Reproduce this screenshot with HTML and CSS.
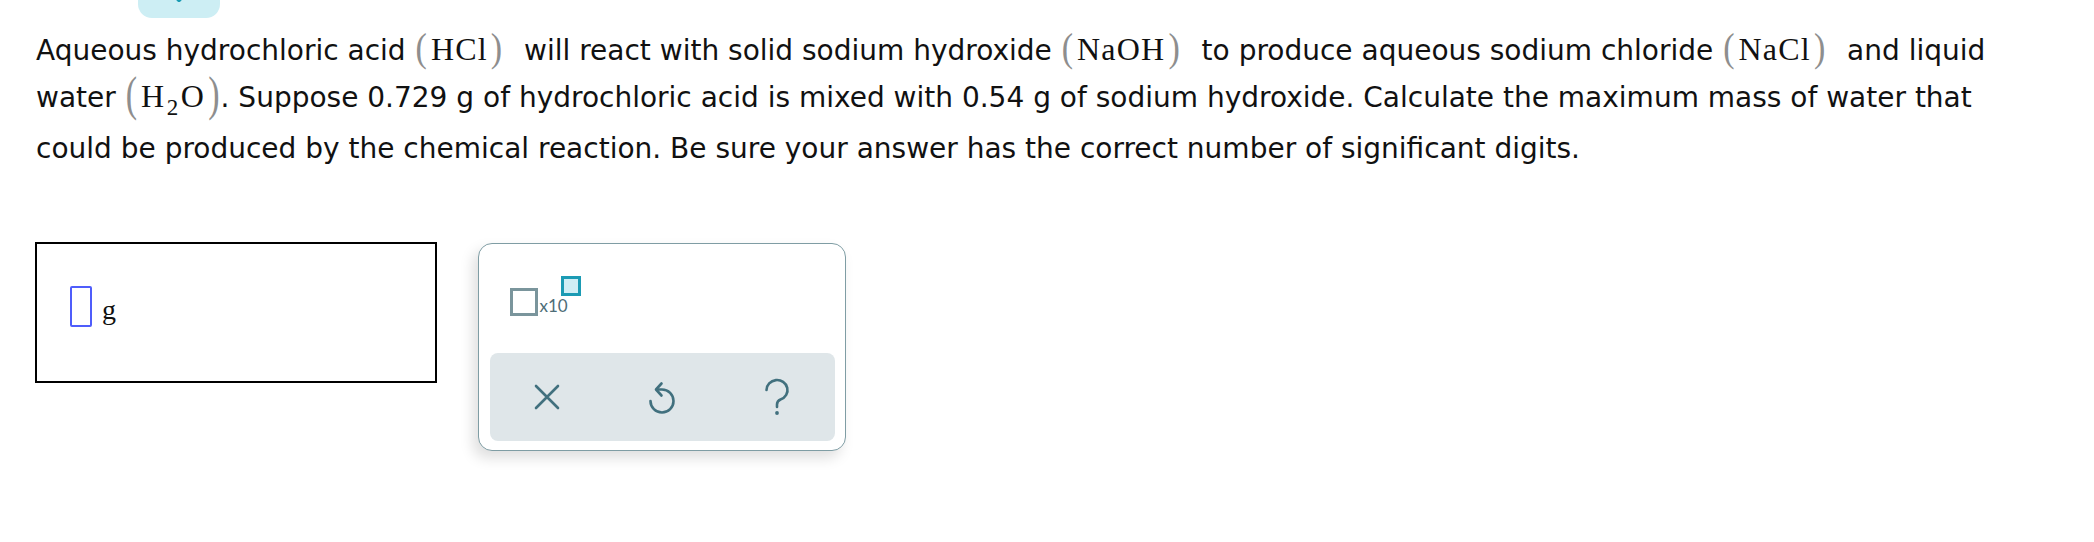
FILE: index.html
```html
<!DOCTYPE html>
<html lang="en">
<head>
<meta charset="utf-8">
<title>Question</title>
<link rel="stylesheet" href="styles.css">
</head>
<body>
<div class="page">
  <div class="top-tab">
    <svg class="tab-chevron" width="24" height="6" viewBox="0 0 24 6"><polyline points="6,-6 12,0 18,-6" fill="none" stroke="#1a9bb3" stroke-width="4" stroke-linecap="round" stroke-linejoin="round"/></svg>
  </div>

  <p class="question">Aqueous hydrochloric acid <span class="chem"><span class="paren paren-open">(</span>HCl<span class="paren paren-close">)</span></span> will react with solid sodium hydroxide <span class="chem"><span class="paren paren-open">(</span>NaOH<span class="paren paren-close">)</span></span> to produce aqueous sodium chloride <span class="chem"><span class="paren paren-open">(</span>NaCl<span class="paren paren-close">)</span></span> and liquid<br>water <span class="chem chem-tall"><span class="paren paren-open">(</span>H<span class="chem-sub">2</span>O<span class="paren paren-close">)</span></span>. Suppose 0.729 g of hydrochloric acid is mixed with 0.54 g of sodium hydroxide. Calculate the maximum mass of water that<br>could be produced by the chemical reaction. Be sure your answer has the correct number of significant digits.</p>

  <div class="answer-row">
    <div class="answer-box">
      <div class="answer-field">
        <span class="cursor-box"></span>
        <span class="unit">g</span>
      </div>
    </div>

    <div class="keypad">
      <div class="keypad-tools">
        <button class="sci-btn" type="button" aria-label="scientific notation">
          <span class="sci-base"></span>
          <span class="sci-text">x10</span>
          <span class="sci-exp"></span>
        </button>
      </div>
      <div class="keypad-actions">
        <button class="action-btn" type="button" aria-label="clear">
          <svg width="26" height="26" viewBox="0 0 26 26"><path d="M2 2 L24 24 M24 2 L2 24" fill="none" stroke="#41707e" stroke-width="2.6" stroke-linecap="round"/></svg>
        </button>
        <button class="action-btn" type="button" aria-label="undo">
          <svg width="30" height="36" viewBox="0 0 30 36"><path d="M3.5 22 A11.5 11.5 0 1 0 15 10.5 H11" fill="none" stroke="#41707e" stroke-width="2.6" stroke-linecap="round" stroke-linejoin="round"/><path d="M14.5 4.5 L9 10.5 L14.5 16.5" fill="none" stroke="#41707e" stroke-width="2.6" stroke-linecap="round" stroke-linejoin="round"/></svg>
        </button>
        <button class="action-btn" type="button" aria-label="help">
          <svg width="26" height="38" viewBox="0 0 26 38"><path d="M2.5 12 A10.5 10 0 1 1 16.5 21.5 Q13 23 13 26.5 V29" fill="none" stroke="#41707e" stroke-width="2.6" stroke-linecap="round" stroke-linejoin="round"/><circle cx="13" cy="35" r="1.9" fill="#41707e"/></svg>
        </button>
      </div>
    </div>
  </div>
</div>
</body>
</html>
```

FILE: styles.css
```css
html, body {
  margin: 0;
  padding: 0;
  background: #ffffff;
}

.page {
  position: relative;
  width: 2094px;
  height: 542px;
  overflow: hidden;
}

.top-tab {
  position: absolute;
  left: 138px;
  top: 0;
  width: 82px;
  height: 18px;
  background: #cdeef4;
  border-radius: 0 0 14px 14px;
  display: flex;
  justify-content: center;
}

.tab-chevron {
  display: block;
}

.question {
  margin: 0;
  padding: 27px 0 0 36px;
  font-family: "DejaVu Sans", Verdana, sans-serif;
  font-size: 28px;
  line-height: 47px;
  color: #111111;
  white-space: nowrap;
}

.chem {
  display: inline-block;
  font-family: "Liberation Serif", "Times New Roman", serif;
  font-size: 32px;
  letter-spacing: 1.2px;
  line-height: 1;
  color: #111111;
  margin-right: 12px;
  vertical-align: baseline;
}

.paren {
  display: inline-block;
  color: #8e8e8e;
  font-size: 34px;
  letter-spacing: 0;
  transform: scaleY(1.15);
  transform-origin: 50% 65%;
}

.paren-open {
  margin: 0 4px 0 1px;
}

.paren-close {
  margin: 0 1px 0 3px;
}

.chem-tall {
  margin-right: 0;
  margin-bottom: 12px;
  letter-spacing: 1.5px;
}

.chem-tall .paren {
  transform: scaleY(1.45);
  transform-origin: 50% 62%;
}

.chem-sub {
  display: inline-block;
  font-size: 23px;
  transform: translateY(8px);
  margin: 0 1px;
}

.answer-row {
  display: flex;
  align-items: flex-start;
  gap: 41px;
  margin: 70px 0 0 35px;
}

.answer-box {
  box-sizing: border-box;
  width: 402px;
  height: 141px;
  border: 2px solid #000000;
  padding: 42px 0 0 33px;
}

.answer-field {
  display: flex;
  align-items: flex-end;
  gap: 10px;
}

.cursor-box {
  box-sizing: border-box;
  width: 22px;
  height: 41px;
  border: 2px solid #4f5dfb;
  border-radius: 2px;
}

.unit {
  font-family: "Liberation Serif", "Times New Roman", serif;
  font-size: 28px;
  line-height: 28px;
  margin-bottom: 3px;
  color: #111111;
}

.keypad {
  box-sizing: border-box;
  width: 368px;
  height: 208px;
  margin-top: 1px;
  border: 1.5px solid #7f9da4;
  border-radius: 14px;
  background: #ffffff;
  box-shadow: -5px 7px 14px rgba(0, 0, 0, 0.13);
  display: flex;
  flex-direction: column;
  padding: 0 10.5px 9.5px 10.5px;
}

.keypad-tools {
  display: flex;
  padding: 31.5px 0 0 20px;
}

.sci-btn {
  display: flex;
  align-items: flex-end;
  height: 40px;
  padding: 0;
  margin: 0;
  border: 0;
  background: transparent;
  cursor: pointer;
}

.sci-base {
  box-sizing: border-box;
  width: 28px;
  height: 28px;
  border: 3px solid #7a959c;
}

.sci-text {
  font-family: Lato, "Open Sans", sans-serif;
  font-size: 17px;
  line-height: 17px;
  margin: 0 0 2px 2px;
  color: #4e6d77;
}

.sci-exp {
  box-sizing: border-box;
  align-self: flex-start;
  width: 20px;
  height: 20px;
  margin-left: -7px;
  border: 3px solid #1b9bb4;
  background: #cfeef5;
}

.keypad-actions {
  margin-top: auto;
  height: 88px;
  border-radius: 8px;
  background: #dfe6e9;
  display: grid;
  grid-template-columns: repeat(3, 1fr);
  align-items: center;
  justify-items: center;
}

.action-btn {
  display: flex;
  align-items: center;
  justify-content: center;
  padding: 0;
  margin: 0;
  border: 0;
  background: transparent;
  cursor: pointer;
}

.action-btn svg {
  display: block;
}
```
